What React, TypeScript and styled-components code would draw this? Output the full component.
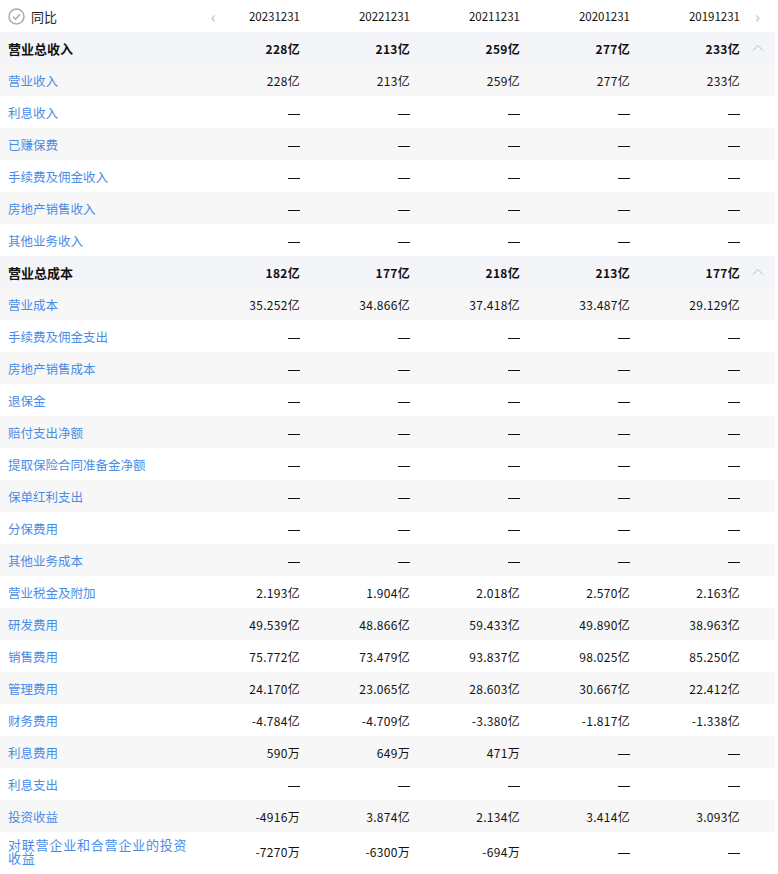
import React from "react";
import styled, { createGlobalStyle } from "styled-components";

const G = createGlobalStyle`
  body { margin: 0; background: #fff; font-family: "Noto Sans CJK SC", "Liberation Sans", sans-serif; }
`;

const Table = styled.div` width: 775px; `;
const Row = styled.div<{ $bg: string; $h?: number }>`
  display: grid;
  grid-template-columns: 190px repeat(5, 110px) 35px;
  height: ${p => p.$h || 32}px;
  align-items: center;
  background: ${p => p.$bg};
`;
const Label = styled.div<{ $bold?: boolean; $long?: boolean }>`
  padding-left: 8px;
  font-size: ${p => (p.$bold ? 13 : p.$long ? 13 : 12.5)}px;
  letter-spacing: ${p => (p.$long ? 0.8 : 0)}px;
  width: ${p => (p.$long ? "182px" : "auto")};
  font-weight: ${p => (p.$bold ? 700 : 400)};
  color: ${p => (p.$bold ? "#111" : "#4a8ce6")};
  line-height: 13px;
  display: flex; align-items: center; gap: 6px;
  flex-wrap: wrap;
`;
const Title = styled(Label)` color: #222; font-size: 13px; flex-wrap: nowrap; `;
const Cell = styled.div<{ $bold?: boolean; $head?: boolean }>`
  text-align: right;
  font-size: ${p => (p.$head ? 11.5 : 12)}px;
  font-weight: ${p => (p.$bold ? 700 : 400)};
  color: #111;
  letter-spacing: ${p => (p.$head ? 0 : 0.3)}px;
`;
const Dash = styled.span`
  display: inline-block; width: 12px; height: 1px; background: #111; vertical-align: middle;
`;
const Side = styled.div`
  display: flex; justify-content: center; color: #bbb; font-size: 16px;
`;
const Arrow = styled.div`
  position: absolute; color: #bbb; font-size: 16px;
`;
const HeaderWrap = styled.div` position: relative; `;

const Check = () => (
  <svg width="17" height="17" viewBox="0 0 17 17">
    <circle cx="8.5" cy="8.5" r="7.5" fill="none" stroke="#aaa" strokeWidth="1.5" />
    <path d="M5 8.8l2.5 2.4 4.5-5" fill="none" stroke="#aaa" strokeWidth="1.5" />
  </svg>
);
const Up = () => (
  <svg width="12" height="8" viewBox="0 0 12 8">
    <path d="M1 6.5l5-5 5 5" fill="none" stroke="#bbb" strokeWidth="1" />
  </svg>
);

const D = "—";
type R = [string, string[], boolean?, number?];
const rows: R[] = [
  ["营业总收入", ["228亿", "213亿", "259亿", "277亿", "233亿"], true],
  ["营业收入", ["228亿", "213亿", "259亿", "277亿", "233亿"]],
  ["利息收入", [D, D, D, D, D]],
  ["已赚保费", [D, D, D, D, D]],
  ["手续费及佣金收入", [D, D, D, D, D]],
  ["房地产销售收入", [D, D, D, D, D]],
  ["其他业务收入", [D, D, D, D, D]],
  ["营业总成本", ["182亿", "177亿", "218亿", "213亿", "177亿"], true],
  ["营业成本", ["35.252亿", "34.866亿", "37.418亿", "33.487亿", "29.129亿"]],
  ["手续费及佣金支出", [D, D, D, D, D]],
  ["房地产销售成本", [D, D, D, D, D]],
  ["退保金", [D, D, D, D, D]],
  ["赔付支出净额", [D, D, D, D, D]],
  ["提取保险合同准备金净额", [D, D, D, D, D]],
  ["保单红利支出", [D, D, D, D, D]],
  ["分保费用", [D, D, D, D, D]],
  ["其他业务成本", [D, D, D, D, D]],
  ["营业税金及附加", ["2.193亿", "1.904亿", "2.018亿", "2.570亿", "2.163亿"]],
  ["研发费用", ["49.539亿", "48.866亿", "59.433亿", "49.890亿", "38.963亿"]],
  ["销售费用", ["75.772亿", "73.479亿", "93.837亿", "98.025亿", "85.250亿"]],
  ["管理费用", ["24.170亿", "23.065亿", "28.603亿", "30.667亿", "22.412亿"]],
  ["财务费用", ["-4.784亿", "-4.709亿", "-3.380亿", "-1.817亿", "-1.338亿"]],
  ["利息费用", ["590万", "649万", "471万", D, D]],
  ["利息支出", [D, D, D, D, D]],
  ["投资收益", ["-4916万", "3.874亿", "2.134亿", "3.414亿", "3.093亿"]],
  ["对联营企业和合营企业的投资收益", ["-7270万", "-6300万", "-694万", D, D], false, 38],
];

export default function App() {
  let i = 0;
  return (
    <Table>
      <G />
      <HeaderWrap>
        <Row $bg="#fff">
          <Title><Check />同比</Title>
          {["20231231", "20221231", "20211231", "20201231", "20191231"].map(d => (
            <Cell key={d} $head>{d}</Cell>
          ))}
          <Side>›</Side>
        </Row>
        <Arrow style={{ left: 211, top: 4 }}>‹</Arrow>
      </HeaderWrap>
      {rows.map(([l, v, b, h]) => {
        let bg: string;
        if (b) { bg = "#f4f5f9"; i = 0; } else { bg = i % 2 === 0 ? "#f7f7f7" : "#fff"; i++; }
        return (
          <Row key={l} $bg={bg} $h={h}>
            <Label $bold={b} $long={l.length > 12}>{l}</Label>
            {v.map((x, k) => <Cell key={k} $bold={b}>{x === D ? <Dash /> : x}</Cell>)}
            <Side>{b ? <Up /> : null}</Side>
          </Row>
        );
      })}
    </Table>
  );
}
